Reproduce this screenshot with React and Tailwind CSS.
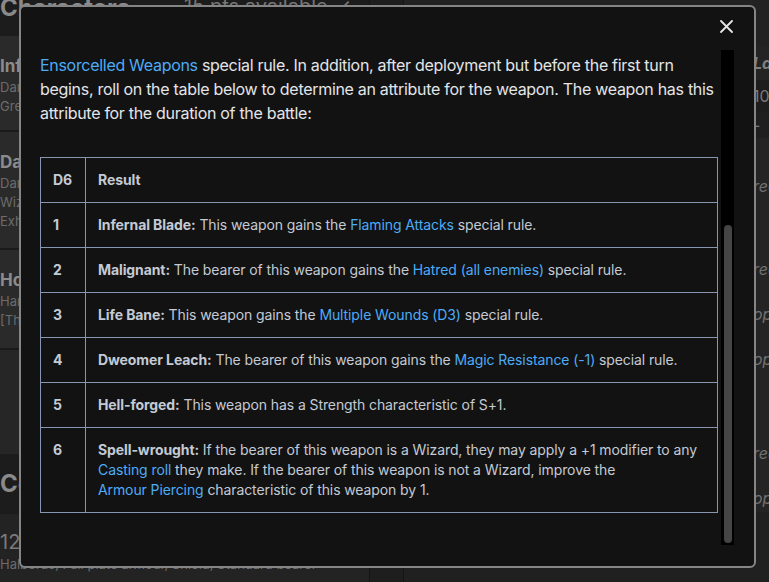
const rows = [
  { d: '1', label: 'Infernal Blade:', parts: [' This weapon gains the ', { link: 'Flaming Attacks' }, ' special rule.'] },
  { d: '2', label: 'Malignant:', parts: [' The bearer of this weapon gains the ', { link: 'Hatred (all enemies)' }, ' special rule.'] },
  { d: '3', label: 'Life Bane:', parts: [' This weapon gains the ', { link: 'Multiple Wounds (D3)' }, ' special rule.'] },
  { d: '4', label: 'Dweomer Leach:', parts: [' The bearer of this weapon gains the ', { link: 'Magic Resistance (-1)' }, ' special rule.'] },
  { d: '5', label: 'Hell-forged:', parts: [' This weapon has a Strength characteristic of S+1.'] },
  {
    d: '6',
    label: 'Spell-wrought:',
    parts: [
      ' If the bearer of this weapon is a Wizard, they may apply a +1 modifier to any ',
      { link: 'Casting roll' },
      ' they make. If the bearer of this weapon is not a Wizard, improve the ',
      { link: 'Armour Piercing' },
      ' characteristic of this weapon by 1.',
    ],
  },
]

const rightRows = [
  { h: 'h-[46px]', t: '', bg: 'bg-[#222]' },
  { h: 'h-[34px]', t: 'Lances', bg: 'bg-[#242424]', head: true },
  { h: 'h-[32px]', t: '10', bg: 'bg-[#1d1d1d]' },
  { h: 'h-[26px]', t: '-', bg: 'bg-[#1f1f1f]' },
  { h: 'h-[34px]', t: '', bg: 'bg-[#242424]' },
  { h: 'h-[28px]', t: 'required', bg: 'bg-[#242424]', it: true },
  { h: 'h-[55px]', t: '', bg: 'bg-[#242424]' },
  { h: 'h-[28px]', t: 'required', bg: 'bg-[#242424]', it: true },
  { h: 'h-[17px]', t: '', bg: 'bg-[#242424]' },
  { h: 'h-[28px]', t: 'optional', bg: 'bg-[#242424]', it: true },
  { h: 'h-[17px]', t: '', bg: 'bg-[#242424]' },
  { h: 'h-[28px]', t: 'optional', bg: 'bg-[#242424]', it: true },
  { h: 'h-[66px]', t: '', bg: 'bg-[#242424]' },
  { h: 'h-[28px]', t: 'required', bg: 'bg-[#242424]', it: true },
  { h: 'h-[17px]', t: '', bg: 'bg-[#242424]' },
  { h: 'h-[28px]', t: 'optional', bg: 'bg-[#242424]', it: true },
]

function Link({ children }) {
  return <span className="text-[#4dabf7] whitespace-nowrap">{children}</span>
}

function Card({ title, lines, h }) {
  return (
    <div className={`${h} bg-[#2a2a2a] border-b-2 border-[#1a1a1a] pt-[18px]`}>
      <div className="text-[17px] font-bold text-[#8c8c8c] leading-6 whitespace-nowrap">{title}</div>
      {lines.map((l) => (
        <div key={l} className="text-[13px] text-[#6c6c6c] leading-[19px] whitespace-nowrap">{l}</div>
      ))}
    </div>
  )
}

export default function App() {
  return (
    <div className="relative w-[769px] h-[582px] overflow-hidden bg-[#202020] font-['Inter',sans-serif]">
      {/* page behind the dialog */}
      <div className="flex h-full">
        <div className="w-[370px] shrink-0 flex flex-col border-r border-[#151515]">
          <div className="h-[36px] shrink-0 bg-[#1c1c1c] flex justify-between items-start pr-[18px]">
            <span className="-mt-[10px] text-[24px] font-bold text-[#8a8a8a] whitespace-nowrap">Characters</span>
            <span className="-mt-[9px] text-[20px] text-[#767676] whitespace-nowrap">15 pts available ✓</span>
          </div>
          <Card h="h-[96px]" title="Infernal Castellan" lines={['Dark lord of the forges', 'Great weapon']} />
          <Card h="h-[118px]" title="Daemonsmith Sorcerer" lines={['Dark armour', 'Wizard (Level 1)', 'Exhalted Ritual Blade']} />
          <Card h="h-[100px]" title="Hobgoblin Khan" lines={['Hand weapon', '[Throwing weapons]']} />
          <div className="h-[104px] shrink-0 bg-[#262626]" />
          <div className="h-[60px] shrink-0 bg-[#1c1c1c] flex items-center">
            <span className="text-[24px] font-bold text-[#8a8a8a] whitespace-nowrap">Core Units</span>
          </div>
          <div className="flex-1 bg-[#232323] pt-[16px]">
            <div className="text-[20px] text-[#7a7a7a] leading-6 whitespace-nowrap">12 Infernal Guard</div>
            <div className="text-[13px] text-[#6c6c6c] leading-5 whitespace-nowrap">Halberds, Full plate armour, Shield, Standard bearer</div>
          </div>
        </div>
        <div className="w-[33px] shrink-0 bg-[#1e1e1e]" />
        <div className="flex-1 min-w-0 flex flex-col border-l border-[#151515]">
          {rightRows.map((r, i) => (
            <div key={i} className={`${r.h} shrink-0 ${r.bg} flex items-center`}>
              <span className="w-[349px] shrink-0" />
              <span
                className={`text-[16px] whitespace-nowrap ${r.head ? 'font-bold italic text-[#7f7f7f]' : ''} ${
                  r.it ? 'italic text-[#707070]' : 'text-[#7a7a7a]'
                }`}
              >
                {r.t}
              </span>
            </div>
          ))}
        </div>
      </div>

      {/* dialog */}
      <div className="absolute left-[19px] top-[5px] w-[737px] h-[563px] bg-[#121212] border-2 border-[#858585] rounded-[6px] flex flex-col">
        <div className="h-[43px] flex justify-end items-start pt-[13px] pr-[21px]">
          <svg width="13" height="13" viewBox="0 0 13 13" className="text-[#e6e6e6]">
            <path d="M1 1 L12 12 M12 1 L1 12" stroke="currentColor" strokeWidth="1.8" strokeLinecap="round" />
          </svg>
        </div>
        <div className="h-[495px] flex pl-[19px] pr-[20px]">
          <div className="w-[678px] overflow-hidden pt-[3px]">
            <p className="text-[16px] leading-6 text-[#e3e5e8] whitespace-nowrap tracking-[-0.3px]">
              <Link>Ensorcelled Weapons</Link> special rule. In addition, after deployment but before the first turn
              <br />
              begins, roll on the table below to determine an attribute for the weapon. The weapon has this
              <br />
              attribute for the duration of the battle:
            </p>
            <table className="mt-[32px] w-full border-collapse border border-[#8797b2] text-[14px] leading-5 text-[#c4cad4] tracking-[-0.1px]">
              <thead>
                <tr>
                  <th className="w-[45px] border border-[#8797b2] px-3 py-3 text-left font-bold">D6</th>
                  <th className="border border-[#8797b2] px-3 py-3 text-left font-bold">Result</th>
                </tr>
              </thead>
              <tbody>
                {rows.map((r) => (
                  <tr key={r.d}>
                    <td className="border border-[#8797b2] px-3 py-3 align-top font-bold">{r.d}</td>
                    <td className="border border-[#8797b2] px-3 py-3 align-top">
                      <span className="font-bold">{r.label}</span>
                      {r.parts.map((p, i) => (typeof p === 'string' ? <span key={i}>{p}</span> : <Link key={i}>{p.link}</Link>))}
                    </td>
                  </tr>
                ))}
              </tbody>
            </table>
          </div>
          <div className="ml-[3px] w-[13px] bg-black flex flex-col justify-end items-center pb-[2px]">
            <div className="w-[8px] h-[318px] rounded-full bg-[#454545]" />
          </div>
        </div>
      </div>
    </div>
  )
}
